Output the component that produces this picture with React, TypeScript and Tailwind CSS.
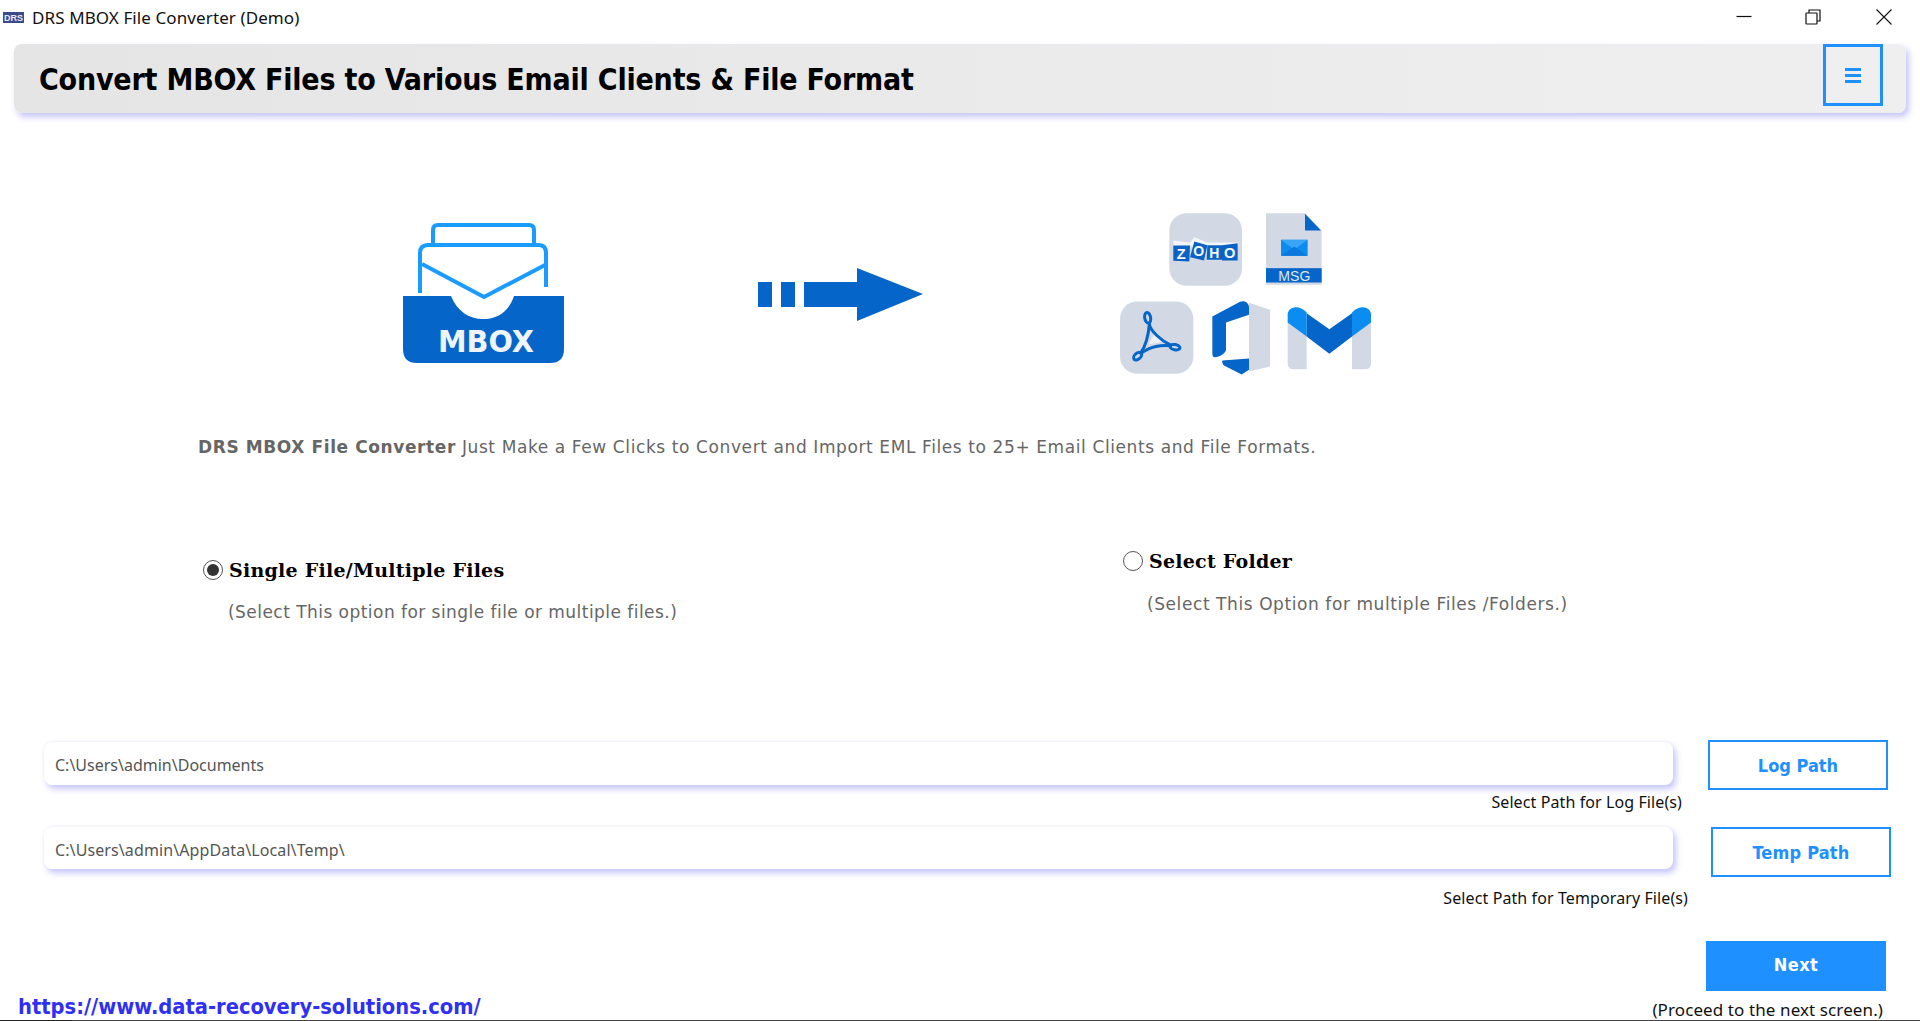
export default function App() {
  return (
    <div className="w-[1920px] h-[1021px] bg-white overflow-hidden flex flex-col font-['DejaVu_Sans',sans-serif]">
      {/* title bar */}
      <div className="h-[44px] flex items-start shrink-0">
        <svg width="21" height="11" viewBox="0 0 21 11" className="ml-[3px] mt-[12px] shrink-0">
          <rect width="21" height="11" fill="#3a4a8c" />
          <text x="10.5" y="9" textAnchor="middle" fontSize="9" fontWeight="700" fill="#e8ecf8" fontFamily="Liberation Sans">DRS</text>
        </svg>
        <div className="ml-[8px] mt-[7px] leading-[22px] text-[17px] tracking-[0.1px] text-[#111] font-['Noto_Sans',sans-serif]">DRS MBOX File Converter (Demo)</div>
        <div className="ml-auto flex">
          <svg width="16" height="16" viewBox="0 0 16 16" className="mt-[9px]"><path d="M0.5 7.5H15.5" stroke="#111" strokeWidth="1.2" /></svg>
          <svg width="16" height="16" viewBox="0 0 16 16" className="mt-[9px] ml-[53px]" fill="none" stroke="#111" strokeWidth="1.2"><path d="M4 4V1H15V12H12" /><rect x="1" y="4" width="11" height="11" rx="0.5" /></svg>
          <svg width="16" height="16" viewBox="0 0 16 16" className="mt-[9px] ml-[55px] mr-[28px]" stroke="#111" strokeWidth="1.1"><path d="M0.5 0.5L15.5 15.5M15.5 0.5L0.5 15.5" /></svg>
        </div>
      </div>

      {/* header */}
      <div className="ml-[14px] w-[1892px] h-[69px] shrink-0 rounded-lg flex items-start justify-between bg-gradient-to-r from-[#e5e5e5] to-[#efefef] shadow-[3px_4px_6px_#c6c6fa]">
        <h1 className="ml-[25px] mt-[18px] text-[30px] leading-[36px] tracking-[-0.2px] font-bold text-black font-['DejaVu_Sans_Condensed','DejaVu_Sans',sans-serif]">Convert MBOX Files to Various Email Clients &amp; File Format</h1>
        <button className="mr-[23px] w-[60px] h-[62px] border-[3px] border-[#1e90ff] flex flex-col items-center justify-center gap-[3px]">
          <span className="block w-[16px] h-[3px] bg-[#1e90ff]" />
          <span className="block w-[16px] h-[3px] bg-[#1e90ff]" />
          <span className="block w-[16px] h-[3px] bg-[#1e90ff]" />
        </button>
      </div>

      {/* hero */}
      <div className="mt-[100px] pl-[403px] flex items-start h-[162px] shrink-0">
        <svg width="161" height="141" viewBox="0 0 161 141" className="mt-[10px] shrink-0" fill="none">
          <path d="M17 70V30Q17 22 25 22H136Q143 22 143 30V64" stroke="#1a9bff" strokeWidth="4" />
          <path d="M30 22V7Q30 2 35 2H126Q131 2 131 7V22" stroke="#1a9bff" strokeWidth="4" />
          <path d="M19 41L81 74L142 42" stroke="#1a9bff" strokeWidth="4" />
          <path d="M0 73H48C54 88 66 96 80 96C95 96 106 88 111 73H161V126Q161 140 147 140H14Q0 140 0 126Z" fill="#0565c8" />
          <text x="83" y="129" textAnchor="middle" fontSize="31" fontWeight="700" fill="#f0f4f8" fontFamily="DejaVu Sans" textLength="96" lengthAdjust="spacingAndGlyphs">MBOX</text>
        </svg>
        <svg width="165" height="53" viewBox="0 0 165 53" className="mt-[55px] ml-[194px] shrink-0" fill="#0565c8">
          <rect x="0" y="14" width="14" height="25" />
          <rect x="23" y="14" width="14" height="25" />
          <path d="M46 14H99V0L165 26L99 53V39H46Z" />
        </svg>
        <svg width="251" height="162" viewBox="60 40 753 485" className="ml-[197px] shrink-0">
          {/* zoho */}
          <rect x="208" y="40" width="218" height="218" rx="52" fill="#d2d9e4" />
          <path d="M220 122L270 128L283 112L322 128L415 128V140H220Z" fill="#f2f5f9" />
          <path d="M220 137L270 137L268 185L220 183Z" fill="#0a63c4" />
          <path d="M283 125L322 136L312 182L270 172Z" fill="#0a63c4" />
          <path d="M322 136H366V180H320Z" fill="#0a63c4" />
          <path d="M366 136L413 130V182H366Z" fill="#0a63c4" />
          <text x="244" y="177" textAnchor="middle" fontSize="44" fontWeight="700" fill="#f4f7fb" fontFamily="Liberation Sans">Z</text>
          <text x="296" y="170" textAnchor="middle" fontSize="42" fontWeight="700" fill="#f4f7fb" fontFamily="Liberation Sans">O</text>
          <text x="343" y="175" textAnchor="middle" fontSize="42" fontWeight="700" fill="#f4f7fb" fontFamily="Liberation Sans">H</text>
          <text x="389" y="175" textAnchor="middle" fontSize="44" fontWeight="700" fill="#f4f7fb" fontFamily="Liberation Sans">O</text>
          {/* msg */}
          <path d="M498 40H615L665 92V255H498Z" fill="#d2d9e4" />
          <path d="M615 42L663 92H615Z" fill="#0565c8" />
          <rect x="543" y="120" width="80" height="48" fill="#0a8cf0" />
          <path d="M543 120H623L583 150Z" fill="#3aa5f5" />
          <path d="M543 168L583 140L623 168Z" fill="#0a78dc" />
          <rect x="498" y="205" width="167" height="43" fill="#0565c8" />
          <text x="583" y="243" textAnchor="middle" fontSize="42" fill="#dfe6f0" fontFamily="Liberation Sans" textLength="96" lengthAdjust="spacingAndGlyphs">MSG</text>
          {/* pdf */}
          <rect x="60" y="305" width="220" height="217" rx="52" fill="#d2d9e4" />
          <path d="M145 434L163 402L195 424Z" fill="#eef1f5" />
          <g fill="none" stroke="#0565c8" strokeWidth="9" strokeLinecap="round">
            <path d="M148 372C150 392 185 424 212 436" />
            <path d="M148 372C146 400 138 436 122 460" />
            <path d="M124 460C150 440 185 434 212 438" />
            <ellipse cx="143" cy="354" rx="9" ry="16" transform="rotate(-10 143 354)" />
            <ellipse cx="113" cy="469" rx="14" ry="9" transform="rotate(-40 113 469)" />
            <ellipse cx="225" cy="442" rx="15" ry="8" transform="rotate(10 225 442)" />
          </g>
          {/* office */}
          <path d="M447 309L510 330V500L447 515Z" fill="#d2d9e4" />
          <path d="M337 350L420 306C434 300 447 310 447 322V345L378 368V450C378 460 358 472 345 472C339 472 337 468 337 460Z" fill="#0565c8" />
          <path d="M367 482L447 476V510L425 524L372 497C367 492 366 487 367 482Z" fill="#0565c8" />
          {/* gmail */}
          <path d="M563 360H620V508H582Q563 508 563 490Z" fill="#d2d9e4" />
          <path d="M756 360H813V490Q813 508 795 508H756Z" fill="#d2d9e4" />
          <path d="M620 340L688 388L756 340V410L688 462L620 410Z" fill="#0565c8" />
          <path d="M563 345C563 322 595 312 620 338V410L563 368Z" fill="#0a8cf0" />
          <path d="M813 345C813 322 781 312 756 338V410L813 368Z" fill="#0a8cf0" />
        </svg>
      </div>

      {/* description */}
      <p className="mt-[62px] ml-[198px] text-[17px] leading-[20px] tracking-[0.6px] text-[#666] shrink-0">
        <b className="font-bold">DRS MBOX File Converter</b> Just Make a Few Clicks to Convert and Import EML Files to 25+ Email Clients and File Formats.
      </p>

      {/* options */}
      <div className="mt-[94px] flex items-start shrink-0">
        <div className="ml-[203px] w-[920px] mt-[9px]">
          <div className="flex items-center gap-[6px] h-[20px]">
            <span className="w-[20px] h-[20px] rounded-full border-[1.5px] border-[#555] flex items-center justify-center">
              <span className="block w-[12px] h-[12px] rounded-full bg-[#333]" />
            </span>
            <span className="text-[19px] tracking-[0.25px] font-bold text-black font-['DejaVu_Serif',serif]">Single File/Multiple Files</span>
          </div>
          <div className="mt-[22px] ml-[25px] text-[17px] leading-[20px] tracking-[0.46px] text-[#666]">(Select This option for single file or multiple files.)</div>
        </div>
        <div>
          <div className="flex items-center gap-[6px] h-[20px]">
            <span className="w-[20px] h-[20px] rounded-full border-[1.5px] border-[#555]" />
            <span className="text-[19px] tracking-[0.25px] font-bold text-black font-['DejaVu_Serif',serif]">Select Folder</span>
          </div>
          <div className="mt-[23px] ml-[24px] text-[17px] leading-[20px] tracking-[0.58px] text-[#666]">(Select This Option for multiple Files /Folders.)</div>
        </div>
      </div>

      {/* log path */}
      <div className="mt-[118px] pl-[44px] flex items-start shrink-0">
        <div className="mt-[2px] w-[1629px] h-[43px] rounded-lg bg-white shadow-[3px_4px_6px_#c6c6fa,0_-1px_3px_#f2f2f8] pl-[11px] pt-[2px] flex items-center text-[16px] text-[#555] font-['Noto_Sans',sans-serif]">C:\Users\admin\Documents</div>
        <button className="ml-[35px] w-[180px] h-[50px] border-[2px] border-[#1e90ff] text-[#1e90ff] text-[18px] font-bold font-['DejaVu_Sans_Condensed','DejaVu_Sans',sans-serif]">Log Path</button>
      </div>
      <div className="mt-[2px] pr-[238px] text-right text-[16px] tracking-[0.1px] leading-[20px] text-[#111] font-['Noto_Sans',sans-serif] shrink-0">Select Path for Log File(s)</div>

      {/* temp path */}
      <div className="mt-[15px] pl-[44px] flex items-start shrink-0">
        <div className="w-[1629px] h-[42px] rounded-lg bg-white shadow-[3px_4px_6px_#c6c6fa,0_-1px_3px_#f2f2f8] pl-[11px] pt-[3px] flex items-center text-[16px] tracking-[0.1px] text-[#555] font-['Noto_Sans',sans-serif]">C:\Users\admin\AppData\Local\Temp\</div>
        <button className="ml-[38px] w-[180px] h-[50px] border-[2px] border-[#1e90ff] text-[#1e90ff] text-[18px] tracking-[0.2px] font-bold font-['DejaVu_Sans_Condensed','DejaVu_Sans',sans-serif]">Temp Path</button>
      </div>
      <div className="mt-[11px] pr-[232px] text-right text-[16px] tracking-[0.1px] leading-[20px] text-[#111] font-['Noto_Sans',sans-serif] shrink-0">Select Path for Temporary File(s)</div>

      {/* footer */}
      <div className="mt-[33px] flex items-end justify-between flex-1 min-h-0">
        <a className="ml-[18px] text-[21.7px] leading-[26px] font-bold text-[#2f2ff5] font-['DejaVu_Sans_Condensed','DejaVu_Sans',sans-serif]">https://www.data-recovery-solutions.com/</a>
        <div className="flex flex-col items-end">
          <button className="mr-[34px] w-[180px] h-[50px] pb-[3px] bg-[#1e90ff] text-white text-[18px] tracking-[0.4px] font-bold font-['DejaVu_Sans_Condensed','DejaVu_Sans',sans-serif]">Next</button>
          <div className="mt-[9px] mr-[37px] text-[17px] tracking-[0.1px] leading-[20px] text-[#111] font-['Noto_Sans',sans-serif]">(Proceed to the next screen.)</div>
        </div>
      </div>
      <div className="h-px flex shrink-0">
        <div className="w-[72px] bg-[#222]" />
        <div className="flex-1 bg-[#444]" />
      </div>
    </div>
  );
}
